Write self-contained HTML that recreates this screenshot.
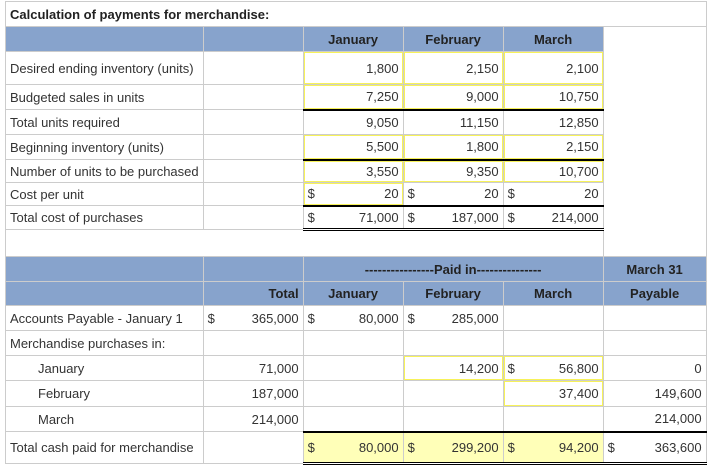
<!DOCTYPE html>
<html><head><meta charset="utf-8"><style>
body{margin:0;background:#fff;font-family:"Liberation Sans",Arial,sans-serif;font-size:13px;color:#333;}
table{position:absolute;left:5px;top:1px;border-collapse:collapse;table-layout:fixed;}
td{border:1px solid #ccc;padding:0 4px;white-space:nowrap;overflow:hidden;}
.h{background:#87a3cc;font-weight:bold;text-align:center;color:#222;}
.r{text-align:right;}
.y{box-shadow:inset 0 0 0 1px #f7f25a;}
.f{display:flex;justify-content:space-between;}
.bb{border-bottom:2px solid #000;}
.db{border-bottom:3px double #000;}
.bt{border-top:2px solid #000;}
.yl{background:#ffffb8;}
.ind{padding-left:32px;}
</style></head><body>
<table>
<colgroup><col style="width:197px"><col style="width:100px"><col style="width:100px"><col style="width:100px"><col style="width:100px"><col style="width:103px"></colgroup>
<tr style="height:25px"><td colspan="6" style="font-weight:bold;color:#222">Calculation of payments for merchandise:</td></tr>
<tr style="height:25px"><td class="h"></td><td class="h"></td><td class="h">January</td><td class="h">February</td><td class="h">March</td><td style="border-bottom:none;border-top:1px solid #ccc"></td></tr>
<tr style="height:33px"><td>Desired ending inventory (units)</td><td></td><td class="r y">1,800</td><td class="r y">2,150</td><td class="r y">2,100</td><td style="border-top:none;border-bottom:none"></td></tr>
<tr style="height:25px"><td>Budgeted sales in units</td><td></td><td class="r y bb">7,250</td><td class="r y bb">9,000</td><td class="r y bb">10,750</td><td style="border-top:none;border-bottom:none"></td></tr>
<tr style="height:25px"><td>Total units required</td><td></td><td class="r">9,050</td><td class="r">11,150</td><td class="r">12,850</td><td style="border-top:none;border-bottom:none"></td></tr>
<tr style="height:25px"><td>Beginning inventory (units)</td><td></td><td class="r y bb">5,500</td><td class="r y bb">1,800</td><td class="r y bb">2,150</td><td style="border-top:none;border-bottom:none"></td></tr>
<tr style="height:23px"><td>Number of units to be purchased</td><td></td><td class="r y">3,550</td><td class="r y">9,350</td><td class="r y">10,700</td><td style="border-top:none;border-bottom:none"></td></tr>
<tr style="height:23px"><td>Cost per unit</td><td></td><td class="y bb"><div class="f"><span>$</span><span>20</span></div></td><td class="bb"><div class="f"><span>$</span><span>20</span></div></td><td class="bb"><div class="f"><span>$</span><span>20</span></div></td><td style="border-top:none;border-bottom:none"></td></tr>
<tr style="height:24px"><td>Total cost of purchases</td><td></td><td class="db"><div class="f"><span>$</span><span>71,000</span></div></td><td class="db"><div class="f"><span>$</span><span>187,000</span></div></td><td class="db"><div class="f"><span>$</span><span>214,000</span></div></td><td style="border-top:none;border-bottom:none"></td></tr>
<tr style="height:27px"><td colspan="5"></td><td style="border-top:none"></td></tr>
<tr style="height:25px"><td class="h"></td><td class="h"></td><td class="h" colspan="3">----------------Paid in---------------</td><td class="h">March 31</td></tr>
<tr style="height:24px"><td class="h"></td><td class="h r">Total</td><td class="h">January</td><td class="h">February</td><td class="h">March</td><td class="h">Payable</td></tr>
<tr style="height:25px"><td>Accounts Payable - January 1</td><td><div class="f"><span>$</span><span>365,000</span></div></td><td><div class="f"><span>$</span><span>80,000</span></div></td><td><div class="f"><span>$</span><span>285,000</span></div></td><td></td><td></td></tr>
<tr style="height:25px"><td>Merchandise purchases in:</td><td></td><td></td><td></td><td></td><td></td></tr>
<tr style="height:25px"><td class="ind">January</td><td class="r">71,000</td><td></td><td class="r y">14,200</td><td class="y"><div class="f"><span>$</span><span>56,800</span></div></td><td class="r">0</td></tr>
<tr style="height:26px"><td class="ind">February</td><td class="r">187,000</td><td></td><td></td><td class="r y">37,400</td><td class="r">149,600</td></tr>
<tr style="height:25px"><td class="ind">March</td><td class="r">214,000</td><td></td><td></td><td></td><td class="r">214,000</td></tr>
<tr style="height:32px"><td>Total cash paid for merchandise</td><td></td><td class="yl bt db"><div class="f"><span>$</span><span>80,000</span></div></td><td class="yl bt db"><div class="f"><span>$</span><span>299,200</span></div></td><td class="yl bt db"><div class="f"><span>$</span><span>94,200</span></div></td><td class="bt db"><div class="f"><span>$</span><span>363,600</span></div></td></tr>
</table>
</body></html>
